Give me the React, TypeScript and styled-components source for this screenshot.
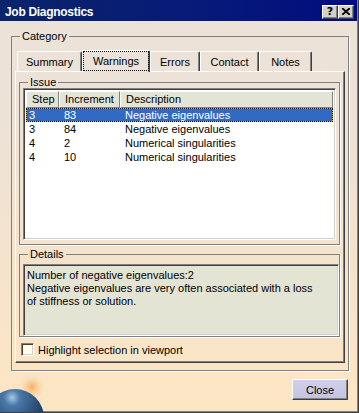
import React from "react";
import styled, { createGlobalStyle } from "styled-components";

const GlobalStyle = createGlobalStyle`
  html, body {
    margin: 0;
    padding: 0;
  }
  body {
    font-family: "Liberation Sans", Arial, sans-serif;
    font-size: 11px;
    color: #000;
  }
`;

const Window = styled.div`
  position: relative;
  isolation: isolate;
  width: 359px;
  height: 413px;
  box-sizing: border-box;
  overflow: hidden;
  display: flex;
  flex-direction: column;
  padding: 0 1px 1px 0;
  border-right: 1px solid #404040;
  border-bottom: 1px solid #404040;
  box-shadow: inset -1px -1px 0 #808080;
  background: linear-gradient(
    180deg,
    #ebe2d9 0%,
    #ede2d6 30%,
    #f5e3cc 65%,
    #fde6c3 100%
  );
`;

const TitleBar = styled.div`
  height: 21px;
  flex: none;
  display: flex;
  align-items: center;
  justify-content: space-between;
  padding: 0 3px 0 5px;
  background: linear-gradient(90deg, #0a2469 0%, #06197a 60%, #000c7e 100%);
`;

const Title = styled.span`
  padding-top: 2px;
  color: #fff;
  font-weight: 700;
  font-size: 12px;
  letter-spacing: -0.3px;
`;

const TitleButtons = styled.div`
  display: flex;
  margin-top: 2px;
`;

const CaptionButton = styled.div`
  width: 16px;
  height: 14px;
  box-sizing: border-box;
  display: flex;
  align-items: center;
  justify-content: center;
  background: #d4d0c8;
  border-top: 1px solid #fff;
  border-left: 1px solid #fff;
  border-right: 1px solid #404040;
  border-bottom: 1px solid #404040;
  box-shadow: inset -1px -1px 0 #808080;
  font-family: "DejaVu Sans", sans-serif;
  font-weight: 700;
  font-size: 11px;
  line-height: 12px;
`;

const Body = styled.div`
  flex: 1;
  display: flex;
  flex-direction: column;
  padding: 9px 8px 0 11px;
`;

const Group = styled.fieldset<{ $padRight?: number; $padBottom?: number; $gap?: number }>`
  margin: ${(p) => p.$gap ?? 0}px 0 0 0;
  min-width: 0;
  display: flex;
  flex-direction: column;
  padding: 0 ${(p) => p.$padRight ?? 3}px ${(p) => p.$padBottom ?? 4}px 3px;
  border: 1px solid #808080;
  box-shadow: 1px 1px 0 #fff;
`;

const Legend = styled.legend`
  margin-left: 5px;
  padding: 0 2px;
  line-height: 13px;
`;

const TabStrip = styled.div`
  display: flex;
  align-items: flex-end;
  height: 22px;
  margin-top: 6px;
  padding-left: 2px;
  position: relative;
  z-index: 1;
`;

const Tab = styled.div<{ $w: number; $active?: boolean }>`
  width: ${(p) => p.$w}px;
  height: ${(p) => (p.$active ? 22 : 20)}px;
  margin-bottom: ${(p) => (p.$active ? -1 : 0)}px;
  box-sizing: border-box;
  display: flex;
  align-items: center;
  justify-content: center;
  padding-bottom: ${(p) => (p.$active ? 2 : 0)}px;
  border-top: 1px solid #fff;
  border-left: 1px solid #fff;
  border-right: 1px solid #404040;
  border-radius: 2px 2px 0 0;
  box-shadow: inset -1px 0 0 #808080;
  background: ${(p) => (p.$active ? "#ece2d7" : "transparent")};
  outline: ${(p) => (p.$active ? "1px dotted #000" : "none")};
  outline-offset: -2px;
`;

const Panel = styled.div`
  display: flex;
  flex-direction: column;
  padding: 4px 4px 6px 3px;
  border-top: 1px solid #fff;
  border-left: 1px solid #fff;
  border-right: 1px solid #404040;
  border-bottom: 1px solid #404040;
  box-shadow: inset -1px -1px 0 #808080;
`;

const Sunken = styled.div`
  box-sizing: border-box;
  border-top: 1px solid #808080;
  border-left: 1px solid #808080;
  border-right: 1px solid #fff;
  border-bottom: 1px solid #fff;
  box-shadow: inset 1px 1px 0 #404040, inset -1px -1px 0 #d4d0c8;
`;

const List = styled(Sunken)`
  height: 152px;
  margin-top: -1px;
  padding: 2px;
  background: #fff;
`;

const Grid = styled.div`
  display: grid;
  grid-template-columns: 33px 61px 1fr;
`;

const HeadCell = styled.div`
  height: 17px;
  box-sizing: border-box;
  padding: 0 0 0 5px;
  line-height: 15px;
  background: #e4e4d6;
  border-top: 1px solid #fff;
  border-left: 1px solid #fff;
  border-right: 1px solid #808080;
  border-bottom: 1px solid #808080;
  white-space: nowrap;
  overflow: hidden;
`;

const Row = styled.div<{ $selected?: boolean }>`
  display: grid;
  grid-template-columns: 33px 61px 1fr;
  height: 14px;
  line-height: 14px;
  color: ${(p) => (p.$selected ? "#fff" : "#000")};
  background: ${(p) => (p.$selected ? "#316ac5" : "transparent")};
  box-shadow: ${(p) => (p.$selected ? "inset 0 0 0 1px #e8b830" : "none")};
  outline: ${(p) => (p.$selected ? "1px dotted #000" : "none")};
  outline-offset: -1px;
`;

const Cell = styled.div<{ $pad: number }>`
  padding-left: ${(p) => p.$pad}px;
  white-space: nowrap;
`;

const DetailsBox = styled(Sunken)`
  height: 72px;
  margin-top: 3px;
  padding: 4px 0 0 3px;
  background: #e4e4d5;
  line-height: 13px;
`;

const CheckRow = styled.label`
  display: flex;
  align-items: center;
  gap: 4px;
  margin-top: 6px;
  padding-left: 2px;
  height: 13px;
`;

const CheckBox = styled(Sunken)`
  width: 13px;
  height: 13px;
  background: #fffcec;
`;

const Footer = styled.div`
  display: flex;
  justify-content: flex-end;
  margin-top: 8px;
  padding-right: 1px;
`;

const Button = styled.div`
  width: 56px;
  height: 21px;
  box-sizing: border-box;
  display: flex;
  align-items: center;
  justify-content: center;
  background: linear-gradient(180deg, #d0d0ec 0%, #c4c4e2 100%);
  border-top: 1px solid #fff;
  border-left: 1px solid #fff;
  border-right: 1px solid #404040;
  border-bottom: 1px solid #404040;
  box-shadow: inset -1px -1px 0 #808080;
`;

const Planet = styled.svg`
  position: absolute;
  left: 0;
  bottom: 0;
  z-index: -1;
`;

const tabs = [
  { label: "Summary", w: 65 },
  { label: "Warnings", w: 68, active: true },
  { label: "Errors", w: 50 },
  { label: "Contact", w: 59 },
  { label: "Notes", w: 53 },
];

const issues = [
  { step: "3", inc: "83", desc: "Negative eigenvalues", selected: true },
  { step: "3", inc: "84", desc: "Negative eigenvalues" },
  { step: "4", inc: "2", desc: "Numerical singularities" },
  { step: "4", inc: "10", desc: "Numerical singularities" },
];

export default function App() {
  return (
    <>
      <GlobalStyle />
      <Window>
        <Planet width="60" height="40" viewBox="0 0 60 40">
          <defs>
            <radialGradient id="glow" cx="0.5" cy="0.5" r="0.5">
              <stop offset="0" stopColor="#f7a24a" stopOpacity="0.85" />
              <stop offset="1" stopColor="#fbd9a8" stopOpacity="0" />
            </radialGradient>
            <radialGradient id="sphere" cx="0.45" cy="0.15" r="0.7">
              <stop offset="0" stopColor="#a4c6e4" />
              <stop offset="0.2" stopColor="#4a78a8" />
              <stop offset="1" stopColor="#132a4c" />
            </radialGradient>
          </defs>
          <circle cx="32" cy="15" r="13" fill="url(#glow)" />
          <circle cx="15" cy="46" r="29" fill="url(#sphere)" />
        </Planet>
        <TitleBar>
          <Title>Job Diagnostics</Title>
          <TitleButtons>
            <CaptionButton>?</CaptionButton>
            <CaptionButton>
              <svg width="8" height="7" viewBox="0 0 8 7">
                <path d="M0 0 L8 7 M8 0 L0 7" stroke="#000" strokeWidth="1.8" />
              </svg>
            </CaptionButton>
          </TitleButtons>
        </TitleBar>
        <Body>
          <Group $padBottom={7}>
            <Legend>Category</Legend>
            <TabStrip>
              {tabs.map((t) => (
                <Tab key={t.label} $w={t.w} $active={t.active}>
                  {t.label}
                </Tab>
              ))}
            </TabStrip>
            <Panel>
              <Group>
                <Legend>Issue</Legend>
                <List>
                  <Grid>
                    <HeadCell>Step</HeadCell>
                    <HeadCell>Increment</HeadCell>
                    <HeadCell>Description</HeadCell>
                  </Grid>
                  {issues.map((r, i) => (
                    <Row key={i} $selected={r.selected}>
                      <Cell $pad={3}>{r.step}</Cell>
                      <Cell $pad={5}>{r.inc}</Cell>
                      <Cell $pad={5}>{r.desc}</Cell>
                    </Row>
                  ))}
                </List>
              </Group>
              <Group $gap={3} $padRight={0} $padBottom={0}>
                <Legend>Details</Legend>
                <DetailsBox>
                  Number of negative eigenvalues:2
                  <br />
                  Negative eigenvalues are very often associated with a loss
                  <br />
                  of stiffness or solution.
                </DetailsBox>
              </Group>
              <CheckRow>
                <CheckBox />
                Highlight selection in viewport
              </CheckRow>
            </Panel>
          </Group>
          <Footer>
            <Button>Close</Button>
          </Footer>
        </Body>
      </Window>
    </>
  );
}
